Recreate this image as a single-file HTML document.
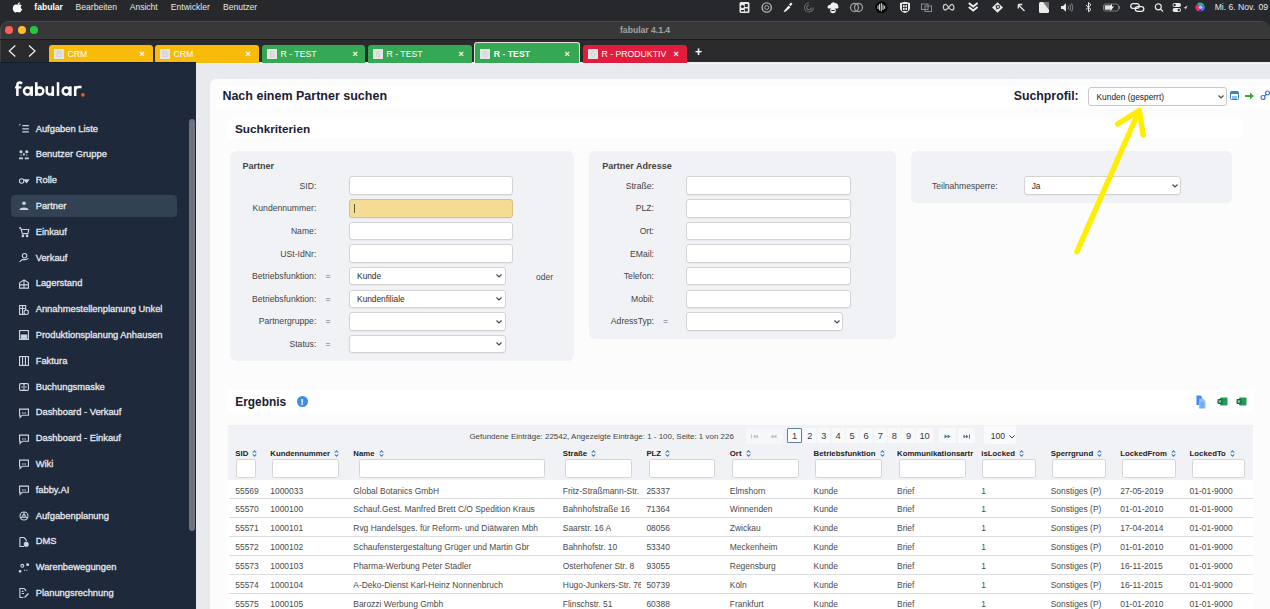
<!DOCTYPE html><html><head><meta charset="utf-8"><style>
*{margin:0;padding:0;box-sizing:border-box}
html,body{width:1270px;height:609px;overflow:hidden;background:#e9eaee;font-family:"Liberation Sans",sans-serif}
.t{position:absolute;white-space:nowrap}
.r{position:absolute}
svg{position:absolute;overflow:visible}
</style></head><body><div class="r" style="left:0px;top:0px;width:1270px;height:32px;background:#26282c;"></div>
<svg style="left:13px;top:2px" width="9" height="10" viewBox="0 0 9 10"><path d="M6.1 0.2c.1.7-.2 1.3-.6 1.8-.4.5-1 .8-1.6.7-.1-.6.2-1.3.6-1.7.4-.5 1.1-.8 1.6-.8zM8.4 7.2c-.3.6-.4.9-.8 1.5-.5.8-1.2 1.7-2 1.7-.8 0-1-.5-2-.5s-1.3.5-2 .5C.8 10.4.1 9.5-.4 8.7-1.6 6.6-.6 3.6.7 3 1.4 2.6 2 2.6 2.6 2.6c.7 0 1.1.4 1.7.4.6 0 .9-.4 1.8-.4.6 0 1.3.3 1.8.9-1.5.9-1.3 3.1.5 3.7z" fill="#fff" transform="translate(0.8,0)"/></svg>
<div class="t" style="left:34.3px;top:1.30px;line-height:12px;font-size:8.6px;color:#fff;font-weight:bold;">fabular</div>
<div class="t" style="left:75.6px;top:1.30px;line-height:12px;font-size:8.55px;color:#e6e6e6;font-weight:normal;">Bearbeiten</div>
<div class="t" style="left:129.7px;top:1.30px;line-height:12px;font-size:8.55px;color:#e6e6e6;font-weight:normal;">Ansicht</div>
<div class="t" style="left:170.8px;top:1.30px;line-height:12px;font-size:8.55px;color:#e6e6e6;font-weight:normal;">Entwickler</div>
<div class="t" style="left:223px;top:1.30px;line-height:12px;font-size:8.55px;color:#e6e6e6;font-weight:normal;">Benutzer</div>
<div class="t" style="left:1214.7px;top:1.30px;line-height:12px;font-size:8.6px;color:#e6e6e6;font-weight:normal;">Mi. 6. Nov.</div>
<div class="t" style="left:1258.4px;top:1.30px;line-height:12px;font-size:8.6px;color:#e6e6e6;font-weight:normal;">09</div>
<svg style="left:0;top:0" width="1270" height="21">
<g>
<rect x="739.5" y="2" width="10" height="11" rx="1.5" fill="#e8e8e8"/>
<circle cx="742.5" cy="6.5" r="1.6" fill="#26282c"/><rect x="744.8" y="4" width="3" height="3" fill="#26282c"/><rect x="744.8" y="8.5" width="3" height="3" fill="#26282c"/><rect x="741" y="10" width="3" height="1.5" fill="#26282c"/>
<circle cx="766.7" cy="7.5" r="4.6" fill="none" stroke="#b0b0b0" stroke-width="1.4"/><circle cx="766.7" cy="7.5" r="2" fill="none" stroke="#b0b0b0" stroke-width="1"/>
<path d="M783.5 11.5 L788.5 5.5 L790.5 7.5 L785 12 Z M789 4.5 L791 2.5 L792.5 4 L790.5 6.2 Z" fill="#f0f0f0"/>
<path d="M813.5 7.5 A4.5 4.5 0 1 1 809 3 M811.3 7.5 A2.3 2.3 0 1 1 809 5.2" fill="none" stroke="#6a6a6a" stroke-width="1.1"/>
<path d="M827.5 8 C827.5 5.5 829 4.5 830.5 4.8 C831 2.5 833.5 1.5 835 3 C836.5 2.8 838.5 4.5 838.5 7 C838.5 8 838 8.5 837 8.5 L828.5 8.5 Z" fill="#f0f0f0"/><circle cx="833" cy="10.5" r="2.8" fill="#f0f0f0"/><rect x="831.2" y="10" width="3.6" height="1" fill="#26282c"/>
<circle cx="854.5" cy="7.5" r="4" fill="none" stroke="#9a9a9a" stroke-width="1.3"/><circle cx="858.5" cy="7.5" r="4" fill="none" stroke="#9a9a9a" stroke-width="1.3"/>
<circle cx="881.4" cy="7.3" r="6" fill="#000"/><path d="M878 5.5 V9 M879.6 4 V10.5 M881.3 3 V11.5 M883 4.5 V10 M884.7 5.8 V8.8" stroke="#e8e8e8" stroke-width="1"/>
<path d="M900 3 L905 1.8 L910 3 L910 8 C910 10.5 907.5 12.5 905 13 C902.5 12.5 900 10.5 900 8 Z" fill="#eaeaea"/><rect x="902.5" y="4.5" width="5" height="6" fill="none" stroke="#26282c" stroke-width="1"/><path d="M902.5 7.5 H907.5 M905 4.5 V10.5" stroke="#26282c" stroke-width=".8"/>
<rect x="921.5" y="4" width="6.5" height="5.5" fill="none" stroke="#8a8a8a" stroke-width="1"/><rect x="925" y="6" width="6.5" height="5.5" fill="none" stroke="#8a8a8a" stroke-width="1"/>
<path d="M948.6 7.5 C947 4 945 3.8 944 5 C942.8 6.5 943.5 10 945 10 C946.5 10 947.5 8.5 948.6 7.5 C949.7 5.8 951 4 952.5 4.5 C954.5 5.5 954.3 10 952.3 10 C950.7 10 949.8 8.8 948.6 7.5Z" fill="none" stroke="#c8c8c8" stroke-width="1.3"/>
<path d="M968.8 3 L973.2 6.5 L977.6 3 M968.8 7 L973.2 10.5 L977.6 7" fill="none" stroke="#f2f2f2" stroke-width="1.8"/>
<path d="M997.5 2.2 L1003 7.5 L997.5 12.8 L992 7.5 Z" fill="#e6e6e6"/><path d="M995.5 5.5 L999.5 5 L1000 8 L996.5 9.5 Z" fill="#26282c"/><circle cx="998" cy="7" r="1" fill="#e6e6e6"/>
<path d="M1024.5 11 L1018.5 5 M1018.3 4.5 L1018.3 8.5 M1018.3 4.5 L1022.3 4.5" stroke="#e6e6e6" stroke-width="1.3" fill="none"/>
<rect x="1039" y="2" width="10" height="11" rx="1.5" fill="#ececec"/><path d="M1043 2 L1049 2 L1049 10 Z" fill="#777"/>
<path d="M1061 6 H1063 L1066 3.2 V11.8 L1063 9 H1061 Z" fill="#eaeaea"/><path d="M1068 5.8 Q1069 7.5 1068 9.2 M1069.8 4.5 Q1071.5 7.5 1069.8 10.5 M1071.6 3.3 Q1074 7.5 1071.6 11.7" stroke="#9a9a9a" stroke-width=".8" fill="none"/>
<path d="M1086 5 L1091 9.5 L1088.5 11.8 V2.5 L1091 4.8 L1086 9.5" stroke="#e6e6e6" stroke-width="1" fill="none"/>
<rect x="1103.5" y="4" width="15" height="7" rx="2" fill="none" stroke="#7a7a7a" stroke-width="1"/><rect x="1104.8" y="5.3" width="7" height="4.4" fill="#e0e0e0"/><path d="M1112 3.5 L1109 8 H1111.3 L1110 11.5 L1114 6.5 H1111.8 Z" fill="#f2f2f2"/><rect x="1119" y="6" width="1" height="3" fill="#7a7a7a"/>
<rect x="1130.7" y="3.7" width="8.5" height="4.6" rx="2.3" stroke="#ececec" stroke-width="1.3" fill="none"/><rect x="1135.3" y="6.7" width="8.5" height="4.6" rx="2.3" stroke="#ececec" stroke-width="1.3" fill="none"/>
<circle cx="1158.3" cy="6.8" r="3" fill="none" stroke="#e6e6e6" stroke-width="1.2"/><path d="M1160.5 9 L1163 11.5" stroke="#e6e6e6" stroke-width="1.3"/>
<rect x="1172.5" y="3" width="8.5" height="4" rx="2" fill="#eaeaea"/><rect x="1172.5" y="8" width="8.5" height="4" rx="2" fill="#eaeaea"/><circle cx="1174.6" cy="5" r="1.2" fill="#26282c"/><circle cx="1178.8" cy="10" r="1.2" fill="#26282c"/>
<path d="M1183.5 8 L1187.5 5.5 L1185.8 9.8 L1185.3 8.3 Z" fill="#d8d8d8"/>
<defs><radialGradient id="siri" cx="0.4" cy="0.4" r="0.7"><stop offset="0" stop-color="#c8d6ff"/><stop offset="0.45" stop-color="#8a4fd8"/><stop offset="1" stop-color="#3a2a6a"/></radialGradient><linearGradient id="siri2" x1="0" y1="0" x2="1" y2="1"><stop offset="0" stop-color="#e83a6a"/><stop offset="0.5" stop-color="#6a5af0"/><stop offset="1" stop-color="#2ac0c0"/></linearGradient></defs>
<clipPath id="sc"><circle cx="1200.1" cy="7.3" r="4.7"/></clipPath><g clip-path="url(#sc)"><rect x="1195" y="2" width="11" height="11" fill="#3b2f8a"/><ellipse cx="1197" cy="8" rx="3" ry="3.5" fill="#e0306a"/><ellipse cx="1201" cy="3.5" rx="3.5" ry="2.2" fill="#30b090"/><ellipse cx="1203" cy="8" rx="2.5" ry="3" fill="#3a7af0"/><circle cx="1200.5" cy="7.3" r="1.8" fill="#c8d0ff" opacity=".85"/></g>
</g></svg>
<div class="r" style="left:0px;top:20.5px;width:1270px;height:19px;background:#4a4a4a;border-radius:9px 9px 0 0"></div>
<div class="r" style="left:1px;top:21.5px;width:1269px;height:18px;background:#383838;border-radius:8px 8px 0 0"></div>
<div class="r" style="left:0px;top:39px;width:1270px;height:1px;background:#1c1c1c;"></div>
<div class="r" style="left:5px;top:26px;width:8px;height:8px;background:#fe5f57;border-radius:50%"></div>
<div class="r" style="left:17.5px;top:26px;width:8px;height:8px;background:#febc2e;border-radius:50%"></div>
<div class="r" style="left:30.200000000000003px;top:26px;width:8px;height:8px;background:#28c840;border-radius:50%"></div>
<div class="t" style="left:620px;top:23.80px;line-height:12px;font-size:8.6px;color:#a3a3a3;font-weight:bold;">fabular 4.1.4</div>
<div class="r" style="left:0px;top:40px;width:1270px;height:22px;background:#2a2a2c;"></div>
<div class="r" style="left:0px;top:40px;width:1px;height:22px;background:#3e3e40;"></div>
<div class="r" style="left:49px;top:45px;width:104px;height:17.5px;background:#f8bb0a;border-radius:3px 3px 0 0"></div>
<div class="r" style="left:54px;top:49.2px;width:10px;height:9.6px;background:#e4e4e4;"></div>
<div class="t" style="left:54px;top:48px;width:10px;text-align:center;line-height:12px;font-size:9px;color:#cfcfcf">B</div>
<div class="t" style="left:67.5px;top:48.00px;line-height:12px;font-size:8.7px;color:#fff;font-weight:normal;">CRM</div>
<div class="t" style="left:139.5px;top:47.50px;line-height:12px;font-size:9px;color:#fff;font-weight:bold;">&#215;</div>
<div class="r" style="left:155px;top:45px;width:104px;height:17.5px;background:#f8bb0a;border-radius:3px 3px 0 0"></div>
<div class="r" style="left:160px;top:49.2px;width:10px;height:9.6px;background:#e4e4e4;"></div>
<div class="t" style="left:160px;top:48px;width:10px;text-align:center;line-height:12px;font-size:9px;color:#cfcfcf">B</div>
<div class="t" style="left:173.5px;top:48.00px;line-height:12px;font-size:8.7px;color:#fff;font-weight:normal;">CRM</div>
<div class="t" style="left:245.5px;top:47.50px;line-height:12px;font-size:9px;color:#fff;font-weight:bold;">&#215;</div>
<div class="r" style="left:262px;top:45px;width:103px;height:17.5px;background:#34a853;border-radius:3px 3px 0 0"></div>
<div class="r" style="left:267px;top:49.2px;width:10px;height:9.6px;background:#e4e4e4;"></div>
<div class="t" style="left:267px;top:48px;width:10px;text-align:center;line-height:12px;font-size:9px;color:#cfcfcf">6</div>
<div class="t" style="left:280.5px;top:48.00px;line-height:12px;font-size:8.7px;color:#fff;font-weight:normal;">R - TEST</div>
<div class="t" style="left:352.5px;top:47.50px;line-height:12px;font-size:9px;color:#fff;font-weight:bold;">&#215;</div>
<div class="r" style="left:368px;top:45px;width:104px;height:17.5px;background:#34a853;border-radius:3px 3px 0 0"></div>
<div class="r" style="left:373px;top:49.2px;width:10px;height:9.6px;background:#e4e4e4;"></div>
<div class="t" style="left:373px;top:48px;width:10px;text-align:center;line-height:12px;font-size:9px;color:#cfcfcf">6</div>
<div class="t" style="left:386.5px;top:48.00px;line-height:12px;font-size:8.7px;color:#fff;font-weight:normal;">R - TEST</div>
<div class="t" style="left:458.5px;top:47.50px;line-height:12px;font-size:9px;color:#fff;font-weight:bold;">&#215;</div>
<div class="r" style="left:474px;top:42px;width:106px;height:20.5px;background:#34a853;border-radius:3px 3px 0 0;border:1.5px solid #e0e0e0;border-bottom:none"></div>
<div class="r" style="left:480.3px;top:49.2px;width:10px;height:9.6px;background:#e4e4e4;"></div>
<div class="t" style="left:480.3px;top:48px;width:10px;text-align:center;line-height:12px;font-size:9px;color:#cfcfcf">6</div>
<div class="t" style="left:493.8px;top:48.00px;line-height:12px;font-size:8.7px;color:#fff;font-weight:bold;">R - TEST</div>
<div class="t" style="left:564.5px;top:47.50px;line-height:12px;font-size:9px;color:#fff;font-weight:bold;">&#215;</div>
<div class="r" style="left:583px;top:45px;width:104px;height:17.5px;background:#e31c3d;border-radius:3px 3px 0 0"></div>
<div class="r" style="left:588px;top:49.2px;width:10px;height:9.6px;background:#e4e4e4;"></div>
<div class="t" style="left:588px;top:48px;width:10px;text-align:center;line-height:12px;font-size:9px;color:#cfcfcf">6</div>
<div class="t" style="left:601.5px;top:48.00px;line-height:12px;font-size:8.7px;color:#fff;font-weight:normal;">R - PRODUKTIV</div>
<div class="t" style="left:673.5px;top:47.50px;line-height:12px;font-size:9px;color:#fff;font-weight:bold;">&#215;</div>
<div class="t" style="left:695px;top:46.00px;line-height:12px;font-size:12px;color:#fff;font-weight:bold;">+</div>
<svg style="left:7px;top:45px" width="30" height="12"><path d="M8.3 0.5 L2.3 6 L8.3 11.5" stroke="#f4f4f4" stroke-width="1.2" fill="none"/><path d="M22 0.5 L28 6 L22 11.5" stroke="#f4f4f4" stroke-width="1.2" fill="none"/></svg>
<div class="r" style="left:0px;top:62px;width:196px;height:547px;background:#1e293b;"></div>
<div class="r" style="left:0px;top:62px;width:196px;height:1px;background:#131c2c;"></div>
<svg style="left:0;top:0" width="100" height="100"><g stroke="#fff" stroke-width="2.5" fill="none">
<path d="M22 83.6 C21.3 82.9 20.6 82.5 19.7 82.5 C18.3 82.5 17.4 83.4 17.4 85.2 V95.9"/><path d="M15.1 87.4 H21.3" stroke-width="2.2"/>
<circle cx="27.5" cy="91.1" r="3.55"/><path d="M31.7 86.3 V95.9"/>
<path d="M36.3 82.2 V95.9"/><circle cx="39.8" cy="91.1" r="3.55"/>
<path d="M46.8 86.3 V91.6 A3 3 0 0 0 52.8 91.6 M52.8 86.3 V95.9"/>
<path d="M58 82.2 V95.9"/>
<circle cx="66.2" cy="91.1" r="3.55"/><path d="M70.4 86.3 V95.9"/>
<path d="M75.2 86.3 V95.9 M75.2 90.8 C75.2 88.2 77 87.1 79.2 87.1 H81.5"/>
</g><circle cx="82.9" cy="94.8" r="1.85" fill="#f15a22"/></svg>
<div class="t" style="left:35.7px;top:122.50px;line-height:12px;font-size:9.35px;color:#e5e7eb;font-weight:normal;-webkit-text-stroke:0.3px #e5e7eb;">Aufgaben Liste</div>
<svg style="left:18.5px;top:124.00px" width="10" height="10" viewBox="0 0 9 9"><g stroke="#cbd5e1" fill="none" stroke-width="1"><path d="M3 1.5 H8.8 M3 4.3 H8.8 M3 7.1 H8.8" stroke-width="1.1"/><path d="M0 1 L1.4 0.3" stroke-width=".9"/></g></svg>
<div class="t" style="left:35.7px;top:148.30px;line-height:12px;font-size:9.35px;color:#e5e7eb;font-weight:normal;-webkit-text-stroke:0.3px #e5e7eb;">Benutzer Gruppe</div>
<svg style="left:18.5px;top:149.80px" width="10" height="10" viewBox="0 0 9 9"><g stroke="#cbd5e1" fill="none" stroke-width="1"><circle cx="1.8" cy="1.6" r=".9" fill="#cbd5e1"/><circle cx="7" cy="1.6" r=".9" fill="#cbd5e1"/><path d="M0 7.5 H3.6 M5.2 7.5 H8.8" stroke-width="1.6"/><circle cx="4.4" cy="4" r=".5" fill="#cbd5e1"/><path d="M1.8 4 V5.5 M7 4 V5.5" stroke-width=".7"/></g></svg>
<div class="t" style="left:35.7px;top:174.10px;line-height:12px;font-size:9.35px;color:#e5e7eb;font-weight:normal;-webkit-text-stroke:0.3px #e5e7eb;">Rolle</div>
<svg style="left:18.5px;top:175.60px" width="10" height="10" viewBox="0 0 9 9"><g stroke="#cbd5e1" fill="none" stroke-width="1"><circle cx="2.4" cy="4.5" r="2"/><path d="M5 3.5 H8.6 L6.8 6 Z" fill="#cbd5e1"/></g></svg>
<div class="r" style="left:10.6px;top:194.7px;width:166px;height:22.7px;background:#334155;border-radius:4px"></div>
<div class="t" style="left:35.7px;top:199.90px;line-height:12px;font-size:9.35px;color:#e5e7eb;font-weight:normal;-webkit-text-stroke:0.3px #e5e7eb;">Partner</div>
<svg style="left:18.5px;top:201.40px" width="10" height="10" viewBox="0 0 9 9"><g stroke="#cbd5e1" fill="none" stroke-width="1"><circle cx="4.5" cy="2" r="1.6" fill="#cbd5e1" stroke="none"/><path d="M0.3 8.2 C0.8 5.2 8.2 5.2 8.7 8.2 Z" fill="#cbd5e1" stroke="none"/></g></svg>
<div class="t" style="left:35.7px;top:225.70px;line-height:12px;font-size:9.35px;color:#e5e7eb;font-weight:normal;-webkit-text-stroke:0.3px #e5e7eb;">Einkauf</div>
<svg style="left:18.5px;top:227.20px" width="10" height="10" viewBox="0 0 9 9"><g stroke="#cbd5e1" fill="none" stroke-width="1"><path d="M0 0.8 H1.5 L3 6 H8 L8.8 2.2 H2"/><circle cx="3.5" cy="8" r=".7" fill="#cbd5e1"/><circle cx="7.3" cy="8" r=".7" fill="#cbd5e1"/></g></svg>
<div class="t" style="left:35.7px;top:251.50px;line-height:12px;font-size:9.35px;color:#e5e7eb;font-weight:normal;-webkit-text-stroke:0.3px #e5e7eb;">Verkauf</div>
<svg style="left:18.5px;top:253.00px" width="10" height="10" viewBox="0 0 9 9"><g stroke="#cbd5e1" fill="none" stroke-width="1"><circle cx="5" cy="2.5" r="2"/><path d="M0.5 8 L3 6 H6 L8.5 5"/></g></svg>
<div class="t" style="left:35.7px;top:277.30px;line-height:12px;font-size:9.35px;color:#e5e7eb;font-weight:normal;-webkit-text-stroke:0.3px #e5e7eb;">Lagerstand</div>
<svg style="left:18.5px;top:278.80px" width="10" height="10" viewBox="0 0 9 9"><g stroke="#cbd5e1" fill="none" stroke-width="1"><path d="M0.5 3.5 L4.5 0.8 L8.5 3.5 V8.2 H0.5 Z M0.5 5.3 H8.5 M4.5 0.8 V8.2"/></g></svg>
<div class="t" style="left:35.7px;top:303.10px;line-height:12px;font-size:9.35px;color:#e5e7eb;font-weight:normal;-webkit-text-stroke:0.3px #e5e7eb;">Annahmestellenplanung Unkel</div>
<svg style="left:18.5px;top:304.60px" width="10" height="10" viewBox="0 0 9 9"><g stroke="#cbd5e1" fill="none" stroke-width="1"><rect x="0.5" y="0.5" width="5.5" height="8"/><path d="M0.5 3.2 H6 M3.2 0.5 V8.5"/><circle cx="6.5" cy="6.5" r="2" fill="#1e293b"/></g></svg>
<div class="t" style="left:35.7px;top:328.90px;line-height:12px;font-size:9.35px;color:#e5e7eb;font-weight:normal;-webkit-text-stroke:0.3px #e5e7eb;">Produktionsplanung Anhausen</div>
<svg style="left:18.5px;top:330.40px" width="10" height="10" viewBox="0 0 9 9"><g stroke="#cbd5e1" fill="none" stroke-width="1"><rect x="0.5" y="0.5" width="8" height="8"/><rect x="2" y="4.5" width="5" height="3" fill="#cbd5e1"/></g></svg>
<div class="t" style="left:35.7px;top:354.70px;line-height:12px;font-size:9.35px;color:#e5e7eb;font-weight:normal;-webkit-text-stroke:0.3px #e5e7eb;">Faktura</div>
<svg style="left:18.5px;top:356.20px" width="10" height="10" viewBox="0 0 9 9"><g stroke="#cbd5e1" fill="none" stroke-width="1"><rect x="0.5" y="0.5" width="8" height="8"/><path d="M3.2 0.5 V8.5 M5.8 0.5 V8.5"/></g></svg>
<div class="t" style="left:35.7px;top:380.50px;line-height:12px;font-size:9.35px;color:#e5e7eb;font-weight:normal;-webkit-text-stroke:0.3px #e5e7eb;">Buchungsmaske</div>
<svg style="left:18.5px;top:382.00px" width="10" height="10" viewBox="0 0 9 9"><g stroke="#cbd5e1" fill="none" stroke-width="1"><rect x="0.5" y="1.5" width="8" height="6" rx="1"/><path d="M4.5 1.5 V7.5 M2 4.5 H3.5 M5.5 4.5 H7"/></g></svg>
<div class="t" style="left:35.7px;top:406.30px;line-height:12px;font-size:9.35px;color:#e5e7eb;font-weight:normal;-webkit-text-stroke:0.3px #e5e7eb;">Dashboard - Verkauf</div>
<svg style="left:18.5px;top:407.80px" width="10" height="10" viewBox="0 0 9 9"><g stroke="#cbd5e1" fill="none" stroke-width="1"><path d="M0.5 1 H8.5 V6.5 H3 L1 8.5 V6.5 H0.5 Z"/><path d="M3 4.5 H4 M5 4.5 H6" stroke-width="1.2"/></g></svg>
<div class="t" style="left:35.7px;top:432.10px;line-height:12px;font-size:9.35px;color:#e5e7eb;font-weight:normal;-webkit-text-stroke:0.3px #e5e7eb;">Dashboard - Einkauf</div>
<svg style="left:18.5px;top:433.60px" width="10" height="10" viewBox="0 0 9 9"><g stroke="#cbd5e1" fill="none" stroke-width="1"><path d="M0.5 1 H8.5 V6.5 H3 L1 8.5 V6.5 H0.5 Z"/><path d="M3 4.5 H4 M5 4.5 H6" stroke-width="1.2"/></g></svg>
<div class="t" style="left:35.7px;top:457.90px;line-height:12px;font-size:9.35px;color:#e5e7eb;font-weight:normal;-webkit-text-stroke:0.3px #e5e7eb;">Wiki</div>
<svg style="left:18.5px;top:459.40px" width="10" height="10" viewBox="0 0 9 9"><g stroke="#cbd5e1" fill="none" stroke-width="1"><path d="M0.5 1 H8.5 V6.5 H3 L1 8.5 V6.5 H0.5 Z"/><path d="M3 4.5 H4 M5 4.5 H6" stroke-width="1.2"/></g></svg>
<div class="t" style="left:35.7px;top:483.70px;line-height:12px;font-size:9.35px;color:#e5e7eb;font-weight:normal;-webkit-text-stroke:0.3px #e5e7eb;">fabby.AI</div>
<svg style="left:18.5px;top:485.20px" width="10" height="10" viewBox="0 0 9 9"><g stroke="#cbd5e1" fill="none" stroke-width="1"><path d="M0.5 1 H8.5 V6.5 H3 L1 8.5 V6.5 H0.5 Z"/><path d="M3 4.5 H4 M5 4.5 H6" stroke-width="1.2"/></g></svg>
<div class="t" style="left:35.7px;top:509.50px;line-height:12px;font-size:9.35px;color:#e5e7eb;font-weight:normal;-webkit-text-stroke:0.3px #e5e7eb;">Aufgabenplanung</div>
<svg style="left:18.5px;top:511.00px" width="10" height="10" viewBox="0 0 9 9"><g stroke="#cbd5e1" fill="none" stroke-width="1"><circle cx="4.5" cy="4.5" r="3.6"/><circle cx="4.5" cy="4.5" r="1.2"/><path d="M4.5 0.9 V3.3 M1.4 6.3 L3.4 5.2 M7.6 6.3 L5.6 5.2"/></g></svg>
<div class="t" style="left:35.7px;top:535.30px;line-height:12px;font-size:9.35px;color:#e5e7eb;font-weight:normal;-webkit-text-stroke:0.3px #e5e7eb;">DMS</div>
<svg style="left:18.5px;top:536.80px" width="10" height="10" viewBox="0 0 9 9"><g stroke="#cbd5e1" fill="none" stroke-width="1"><path d="M0.8 0.5 H4.5 L6.5 2.5 V4 M4.5 8.5 H0.8 V0.5"/><circle cx="6.5" cy="6.5" r="1.8" fill="#cbd5e1"/></g></svg>
<div class="t" style="left:35.7px;top:561.10px;line-height:12px;font-size:9.35px;color:#e5e7eb;font-weight:normal;-webkit-text-stroke:0.3px #e5e7eb;">Warenbewegungen</div>
<svg style="left:18.5px;top:562.60px" width="10" height="10" viewBox="0 0 9 9"><g stroke="#cbd5e1" fill="none" stroke-width="1"><circle cx="3" cy="2.5" r="1.3"/><circle cx="1" cy="7.5" r=".8" fill="#cbd5e1"/><circle cx="7.8" cy="1.5" r=".8" fill="#cbd5e1"/><path d="M4.5 6.5 H8.5" stroke-dasharray="1 1"/></g></svg>
<div class="t" style="left:35.7px;top:586.90px;line-height:12px;font-size:9.35px;color:#e5e7eb;font-weight:normal;-webkit-text-stroke:0.3px #e5e7eb;">Planungsrechnung</div>
<svg style="left:18.5px;top:588.40px" width="10" height="10" viewBox="0 0 9 9"><g stroke="#cbd5e1" fill="none" stroke-width="1"><path d="M6 3 V1.8 L4.5 0.5 H0.8 V8.5 H4"/><path d="M2.5 5 H4.5 M2.5 3 H4"/><path d="M5 8.5 L8.5 5" stroke-width="1.2"/></g></svg>
<div class="r" style="left:188.7px;top:118.7px;width:6px;height:412px;background:#6e737d;border-radius:3px"></div>
<div class="r" style="left:196px;top:62.5px;width:1074px;height:1.5px;background:#f6f6f8;"></div>
<div class="r" style="left:209.5px;top:79px;width:1061px;height:530px;background:#fcfcfd;border-radius:6px 0 0 0"></div>
<div class="r" style="left:216px;top:85.5px;width:1054px;height:22.3px;background:#ffffff;"></div>
<div class="t" style="left:222.4px;top:87.70px;line-height:16px;font-size:12.5px;color:#1b2030;font-weight:bold;">Nach einem Partner suchen</div>
<div class="t" style="left:1013.8px;top:87.70px;line-height:16px;font-size:12.3px;color:#1b2030;font-weight:bold;">Suchprofil:</div>
<div class="r" style="left:1088px;top:87px;width:139px;height:18.5px;background:#fff;border:1px solid #c8c8c8;border-radius:3px"></div>
<div class="t" style="left:1096.5px;top:90.60px;line-height:12px;font-size:8.4px;color:#222;font-weight:normal;">Kunden (gesperrt)</div>
<svg style="left:1218px;top:94.5px" width="6" height="4"><path d="M0.5 0.5 L3 3 L5.5 0.5" stroke="#444" stroke-width="1.1" fill="none"/></svg>
<svg style="left:1230px;top:91px" width="9" height="9" viewBox="0 0 9 9"><rect x="0.5" y="0.5" width="8" height="8" rx="1" fill="none" stroke="#3b82c4" stroke-width="1"/><rect x="0.5" y="0.5" width="8" height="2.5" fill="#3b82c4"/><rect x="2" y="5" width="5" height="3" fill="#8fc0ea"/></svg>
<svg style="left:1245px;top:92px" width="10" height="8" viewBox="0 0 10 8"><path d="M0 4 H7" stroke="#3aa53a" stroke-width="2"/><path d="M5 0.8 L9 4 L5 7.2 Z" fill="#3aa53a"/></svg>
<svg style="left:1260px;top:90px" width="10" height="11" viewBox="0 0 10 11"><circle cx="3" cy="7.5" r="2" fill="none" stroke="#2f6fd8" stroke-width="1.2"/><circle cx="7.5" cy="3" r="2" fill="none" stroke="#2f6fd8" stroke-width="1.2"/><path d="M4.3 6.2 L6.2 4.3" stroke="#2f6fd8" stroke-width="1.2"/></svg>
<div class="r" style="left:228px;top:119px;width:1013px;height:18.5px;background:#ffffff;"></div>
<div class="t" style="left:235px;top:120.60px;line-height:16px;font-size:11.75px;color:#1b2030;font-weight:bold;">Suchkriterien</div>
<div class="r" style="left:229.5px;top:150.5px;width:344.5px;height:210.5px;background:#f1f2f6;border-radius:6px"></div>
<div class="r" style="left:589.2px;top:150.5px;width:306.8px;height:188.5px;background:#f1f2f6;border-radius:6px"></div>
<div class="r" style="left:910.7px;top:150.5px;width:321px;height:52.2px;background:#f1f2f6;border-radius:6px"></div>
<div class="t" style="left:242.4px;top:159.90px;line-height:12px;font-size:9.05px;color:#454545;font-weight:bold;">Partner</div>
<div class="t" style="left:602.2px;top:159.90px;line-height:12px;font-size:9.05px;color:#454545;font-weight:bold;">Partner Adresse</div>
<div class="t" style="left:16.30000000000001px;width:300px;text-align:right;top:179.60px;line-height:12px;font-size:8.65px;color:#444;font-weight:normal;">SID:</div>
<div class="r" style="left:349.1px;top:176.35px;width:164px;height:18.5px;background:#fff;border:1px solid #d3d3d3;border-radius:3px;box-shadow:0 1px 1px rgba(0,0,0,.04)"></div>
<div class="t" style="left:16.30000000000001px;width:300px;text-align:right;top:202.30px;line-height:12px;font-size:8.65px;color:#444;font-weight:normal;">Kundennummer:</div>
<div class="r" style="left:349.1px;top:199.05px;width:164px;height:18.5px;background:#f5dc95;border:1px solid #dcc07e;border-radius:3px;box-shadow:0 1px 1px rgba(0,0,0,.04)"></div>
<div class="t" style="left:16.30000000000001px;width:300px;text-align:right;top:225.00px;line-height:12px;font-size:8.65px;color:#444;font-weight:normal;">Name:</div>
<div class="r" style="left:349.1px;top:221.75px;width:164px;height:18.5px;background:#fff;border:1px solid #d3d3d3;border-radius:3px;box-shadow:0 1px 1px rgba(0,0,0,.04)"></div>
<div class="t" style="left:16.30000000000001px;width:300px;text-align:right;top:247.60px;line-height:12px;font-size:8.65px;color:#444;font-weight:normal;">USt-IdNr:</div>
<div class="r" style="left:349.1px;top:244.35px;width:164px;height:18.5px;background:#fff;border:1px solid #d3d3d3;border-radius:3px;box-shadow:0 1px 1px rgba(0,0,0,.04)"></div>
<div class="t" style="left:16.30000000000001px;width:300px;text-align:right;top:270.20px;line-height:12px;font-size:8.65px;color:#444;font-weight:normal;">Betriebsfunktion:</div>
<div class="t" style="left:325.6px;top:270.20px;line-height:12px;font-size:8.6px;color:#666;font-weight:normal;">=</div>
<div class="r" style="left:349.1px;top:266.95px;width:156.6px;height:18.5px;background:#fff;border:1px solid #d3d3d3;border-radius:3px;box-shadow:0 1px 1px rgba(0,0,0,.04)"></div>
<div class="t" style="left:357.1px;top:270.20px;line-height:12px;font-size:8.3px;color:#2a2a2a;font-weight:normal;">Kunde</div>
<svg style="left:496.20000000000005px;top:274.4px" width="6" height="4"><path d="M0.5 0.5 L3 3 L5.5 0.5" stroke="#444" stroke-width="1.1" fill="none"/></svg>
<div class="t" style="left:16.30000000000001px;width:300px;text-align:right;top:292.80px;line-height:12px;font-size:8.65px;color:#444;font-weight:normal;">Betriebsfunktion:</div>
<div class="t" style="left:325.6px;top:292.80px;line-height:12px;font-size:8.6px;color:#666;font-weight:normal;">=</div>
<div class="r" style="left:349.1px;top:289.55px;width:156.6px;height:18.5px;background:#fff;border:1px solid #d3d3d3;border-radius:3px;box-shadow:0 1px 1px rgba(0,0,0,.04)"></div>
<div class="t" style="left:357.1px;top:292.80px;line-height:12px;font-size:8.3px;color:#2a2a2a;font-weight:normal;">Kundenfiliale</div>
<svg style="left:496.20000000000005px;top:297.0px" width="6" height="4"><path d="M0.5 0.5 L3 3 L5.5 0.5" stroke="#444" stroke-width="1.1" fill="none"/></svg>
<div class="t" style="left:16.30000000000001px;width:300px;text-align:right;top:315.40px;line-height:12px;font-size:8.65px;color:#444;font-weight:normal;">Partnergruppe:</div>
<div class="t" style="left:325.6px;top:315.40px;line-height:12px;font-size:8.6px;color:#666;font-weight:normal;">=</div>
<div class="r" style="left:349.1px;top:312.15px;width:156.6px;height:18.5px;background:#fff;border:1px solid #d3d3d3;border-radius:3px;box-shadow:0 1px 1px rgba(0,0,0,.04)"></div>
<svg style="left:496.20000000000005px;top:319.59999999999997px" width="6" height="4"><path d="M0.5 0.5 L3 3 L5.5 0.5" stroke="#444" stroke-width="1.1" fill="none"/></svg>
<div class="t" style="left:16.30000000000001px;width:300px;text-align:right;top:338.00px;line-height:12px;font-size:8.65px;color:#444;font-weight:normal;">Status:</div>
<div class="t" style="left:325.6px;top:338.00px;line-height:12px;font-size:8.6px;color:#666;font-weight:normal;">=</div>
<div class="r" style="left:349.1px;top:334.75px;width:156.6px;height:18.5px;background:#fff;border:1px solid #d3d3d3;border-radius:3px;box-shadow:0 1px 1px rgba(0,0,0,.04)"></div>
<svg style="left:496.20000000000005px;top:342.2px" width="6" height="4"><path d="M0.5 0.5 L3 3 L5.5 0.5" stroke="#444" stroke-width="1.1" fill="none"/></svg>
<div class="r" style="left:354px;top:344px;width:0px;height:0px;background:none;"></div>
<div class="r" style="left:354.3px;top:203.8px;width:1px;height:9px;background:#5a5a48;"></div>
<div class="t" style="left:536px;top:270.60px;line-height:12px;font-size:8.5px;color:#444;font-weight:normal;">oder</div>
<div class="t" style="left:354px;width:300px;text-align:right;top:179.60px;line-height:12px;font-size:8.65px;color:#444;font-weight:normal;">Straße:</div>
<div class="r" style="left:686.4px;top:176.35px;width:164.6px;height:18.5px;background:#fff;border:1px solid #d3d3d3;border-radius:3px;box-shadow:0 1px 1px rgba(0,0,0,.04)"></div>
<div class="t" style="left:354px;width:300px;text-align:right;top:202.30px;line-height:12px;font-size:8.65px;color:#444;font-weight:normal;">PLZ:</div>
<div class="r" style="left:686.4px;top:199.05px;width:164.6px;height:18.5px;background:#fff;border:1px solid #d3d3d3;border-radius:3px;box-shadow:0 1px 1px rgba(0,0,0,.04)"></div>
<div class="t" style="left:354px;width:300px;text-align:right;top:225.00px;line-height:12px;font-size:8.65px;color:#444;font-weight:normal;">Ort:</div>
<div class="r" style="left:686.4px;top:221.75px;width:164.6px;height:18.5px;background:#fff;border:1px solid #d3d3d3;border-radius:3px;box-shadow:0 1px 1px rgba(0,0,0,.04)"></div>
<div class="t" style="left:354px;width:300px;text-align:right;top:247.60px;line-height:12px;font-size:8.65px;color:#444;font-weight:normal;">EMail:</div>
<div class="r" style="left:686.4px;top:244.35px;width:164.6px;height:18.5px;background:#fff;border:1px solid #d3d3d3;border-radius:3px;box-shadow:0 1px 1px rgba(0,0,0,.04)"></div>
<div class="t" style="left:354px;width:300px;text-align:right;top:270.20px;line-height:12px;font-size:8.65px;color:#444;font-weight:normal;">Telefon:</div>
<div class="r" style="left:686.4px;top:266.95px;width:164.6px;height:18.5px;background:#fff;border:1px solid #d3d3d3;border-radius:3px;box-shadow:0 1px 1px rgba(0,0,0,.04)"></div>
<div class="t" style="left:354px;width:300px;text-align:right;top:292.80px;line-height:12px;font-size:8.65px;color:#444;font-weight:normal;">Mobil:</div>
<div class="r" style="left:686.4px;top:289.55px;width:164.6px;height:18.5px;background:#fff;border:1px solid #d3d3d3;border-radius:3px;box-shadow:0 1px 1px rgba(0,0,0,.04)"></div>
<div class="t" style="left:354px;width:300px;text-align:right;top:315.40px;line-height:12px;font-size:8.65px;color:#444;font-weight:normal;">AdressTyp:</div>
<div class="t" style="left:663px;top:315.40px;line-height:12px;font-size:8.6px;color:#666;font-weight:normal;">=</div>
<div class="r" style="left:686.4px;top:312.15px;width:156.6px;height:18.5px;background:#fff;border:1px solid #d3d3d3;border-radius:3px;box-shadow:0 1px 1px rgba(0,0,0,.04)"></div>
<svg style="left:833.5px;top:319.59999999999997px" width="6" height="4"><path d="M0.5 0.5 L3 3 L5.5 0.5" stroke="#444" stroke-width="1.1" fill="none"/></svg>
<div class="t" style="left:932px;top:179.90px;line-height:12px;font-size:8.55px;color:#444;font-weight:normal;">Teilnahmesperre:</div>
<div class="r" style="left:1023.7px;top:176.2px;width:157.3px;height:19px;background:#fff;border:1px solid #d3d3d3;border-radius:3px;box-shadow:0 1px 1px rgba(0,0,0,.04)"></div>
<div class="t" style="left:1031.7px;top:179.70px;line-height:12px;font-size:8.3px;color:#2a2a2a;font-weight:normal;">Ja</div>
<svg style="left:1171.5px;top:183.89999999999998px" width="6" height="4"><path d="M0.5 0.5 L3 3 L5.5 0.5" stroke="#444" stroke-width="1.1" fill="none"/></svg>
<div class="r" style="left:228.4px;top:389.5px;width:1025px;height:23.2px;background:#ffffff;"></div>
<div class="t" style="left:235.3px;top:394.00px;line-height:16px;font-size:11.9px;color:#1b2030;font-weight:bold;">Ergebnis</div>
<div class="r" style="left:296.5px;top:396.2px;width:11px;height:11px;background:#3b8fe0;border-radius:50%"></div>
<div class="t" style="left:296.5px;top:395.7px;width:11px;text-align:center;line-height:12px;font-size:9px;color:#fff;font-weight:bold">!</div>
<svg style="left:1196px;top:394.5px" width="10" height="14" viewBox="0 0 10 14"><path d="M0.5 0.5 H4.5 L6 2 V10 H0.5 Z" fill="#3d8ef0"/><path d="M3 3.5 H7 L9.5 6 V13.5 H3 Z" fill="#8cc0f7"/><path d="M4.5 8 H8 M4.5 10 H8 M4.5 12 H8" stroke="#3d8ef0" stroke-width=".8"/></svg>
<svg style="left:1217px;top:397px" width="11" height="9" viewBox="0 0 11 9"><rect x="3" y="0.5" width="7.5" height="8" rx="1" fill="#1f9d55"/><rect x="0.5" y="2" width="5" height="5" rx="1" fill="#0f6b3a"/><path d="M1.8 3.2 L4 5.8 M4 3.2 L1.8 5.8" stroke="#fff" stroke-width=".7"/></svg>
<svg style="left:1236px;top:397px" width="11" height="9" viewBox="0 0 11 9"><rect x="3" y="0.5" width="7.5" height="8" rx="1" fill="#1f9d55"/><rect x="0.5" y="2" width="5" height="5" rx="1" fill="#0f6b3a"/><path d="M1.8 3.2 L4 5.8 M4 3.2 L1.8 5.8" stroke="#fff" stroke-width=".7"/></svg>
<div class="r" style="left:228.4px;top:424.8px;width:1024.2px;height:55px;background:#f1f2f6;"></div>
<div class="t" style="left:469.4px;top:430.50px;line-height:12px;font-size:7.96px;color:#444;font-weight:normal;">Gefundene Einträge: 22542, Angezeigte Einträge: 1 - 100, Seite: 1 von 226</div>
<div class="r" style="left:745.5px;top:429px;width:19px;height:14.5px;background:#f6f7f9;"></div>
<div class="r" style="left:764.8px;top:429px;width:18.6px;height:14.5px;background:#f6f7f9;"></div>
<svg style="left:751px;top:433.5px" width="8" height="5"><rect x="0" y="0.3" width="0.9" height="4.4" fill="#b4c0cc"/><path d="M2 2.5 L4.5 0.5 V4.5 Z M4.5 2.5 L7 0.5 V4.5 Z" fill="#b4c0cc"/></svg>
<svg style="left:770px;top:433.5px" width="8" height="5"><path d="M0.5 2.5 L3.5 0.5 V4.5 Z M3.5 2.5 L6.5 0.5 V4.5 Z" fill="#b4c0cc"/></svg>
<div class="r" style="left:787.2px;top:428.3px;width:14.7px;height:15px;background:#fafbfc;border:1.5px solid #5f8296;border-radius:1px"></div>
<div class="t" style="left:787.2px;top:430.3px;width:14.7px;text-align:center;line-height:12px;font-size:9.3px;color:#3a3a3a">1</div>
<div class="r" style="left:803.3px;top:428.3px;width:13px;height:15px;background:#f8f9fb;"></div>
<div class="t" style="left:803.3px;top:430.3px;width:13px;text-align:center;line-height:12px;font-size:9.3px;color:#3a3a3a">2</div>
<div class="r" style="left:817.4px;top:428.3px;width:13px;height:15px;background:#f8f9fb;"></div>
<div class="t" style="left:817.4px;top:430.3px;width:13px;text-align:center;line-height:12px;font-size:9.3px;color:#3a3a3a">3</div>
<div class="r" style="left:831.5px;top:428.3px;width:13px;height:15px;background:#f8f9fb;"></div>
<div class="t" style="left:831.5px;top:430.3px;width:13px;text-align:center;line-height:12px;font-size:9.3px;color:#3a3a3a">4</div>
<div class="r" style="left:845.6px;top:428.3px;width:13px;height:15px;background:#f8f9fb;"></div>
<div class="t" style="left:845.6px;top:430.3px;width:13px;text-align:center;line-height:12px;font-size:9.3px;color:#3a3a3a">5</div>
<div class="r" style="left:859.7px;top:428.3px;width:13px;height:15px;background:#f8f9fb;"></div>
<div class="t" style="left:859.7px;top:430.3px;width:13px;text-align:center;line-height:12px;font-size:9.3px;color:#3a3a3a">6</div>
<div class="r" style="left:873.8000000000001px;top:428.3px;width:13px;height:15px;background:#f8f9fb;"></div>
<div class="t" style="left:873.8000000000001px;top:430.3px;width:13px;text-align:center;line-height:12px;font-size:9.3px;color:#3a3a3a">7</div>
<div class="r" style="left:887.9000000000001px;top:428.3px;width:13px;height:15px;background:#f8f9fb;"></div>
<div class="t" style="left:887.9000000000001px;top:430.3px;width:13px;text-align:center;line-height:12px;font-size:9.3px;color:#3a3a3a">8</div>
<div class="r" style="left:902.0000000000001px;top:428.3px;width:13px;height:15px;background:#f8f9fb;"></div>
<div class="t" style="left:902.0000000000001px;top:430.3px;width:13px;text-align:center;line-height:12px;font-size:9.3px;color:#3a3a3a">9</div>
<div class="r" style="left:916px;top:428.3px;width:17.2px;height:15px;background:#f8f9fb;"></div>
<div class="t" style="left:916px;top:430.3px;width:17.2px;text-align:center;line-height:12px;font-size:9.3px;color:#3a3a3a">10</div>
<div class="r" style="left:939px;top:428.3px;width:17px;height:15px;background:#f8f9fb;"></div>
<div class="r" style="left:958px;top:428.3px;width:17px;height:15px;background:#f8f9fb;"></div>
<svg style="left:944px;top:433.5px" width="8" height="5"><path d="M0.5 0.5 L3.5 2.5 L0.5 4.5 Z M3.5 0.5 L6.5 2.5 L3.5 4.5 Z" fill="#4f7590"/></svg>
<svg style="left:963px;top:433.5px" width="8" height="5"><path d="M0.5 0.5 L3 2.5 L0.5 4.5 Z M3 0.5 L5.5 2.5 L3 4.5 Z" fill="#4f7590"/><rect x="6" y="0.3" width="0.9" height="4.4" fill="#4f7590"/></svg>
<div class="r" style="left:984px;top:426px;width:31.7px;height:18px;background:#f9fafb;border-radius:3px"></div>
<div class="t" style="left:990.7px;top:430.00px;line-height:12px;font-size:8.6px;color:#333;font-weight:normal;">100</div>
<svg style="left:1008.5px;top:434.5px" width="6" height="4"><path d="M0.5 0.5 L3 3 L5.5 0.5" stroke="#444" stroke-width="1" fill="none"/></svg>
<div class="t" style="left:235.3px;top:447.60px;line-height:12px;font-size:7.8px;color:#222;font-weight:bold;">SID</div>
<svg style="left:252.30312500000002px;top:450px" width="5" height="7" viewBox="0 0 5 7"><path d="M0.7 2.6 L2.5 0.8 L4.3 2.6 M0.7 4.4 L2.5 6.2 L4.3 4.4" stroke="#4a86b5" stroke-width="1.05" fill="none"/></svg>
<div class="r" style="left:236px;top:459.1px;width:20px;height:18.5px;background:#fff;border:1px solid #d4d4d4;border-radius:2.5px"></div>
<div class="t" style="left:270.3px;top:447.60px;line-height:12px;font-size:7.8px;color:#222;font-weight:bold;">Kundennummer</div>
<svg style="left:334.1px;top:450px" width="5" height="7" viewBox="0 0 5 7"><path d="M0.7 2.6 L2.5 0.8 L4.3 2.6 M0.7 4.4 L2.5 6.2 L4.3 4.4" stroke="#4a86b5" stroke-width="1.05" fill="none"/></svg>
<div class="r" style="left:271.5px;top:459.1px;width:67.10000000000002px;height:18.5px;background:#fff;border:1px solid #d4d4d4;border-radius:2.5px"></div>
<div class="t" style="left:353.3px;top:447.60px;line-height:12px;font-size:7.8px;color:#222;font-weight:bold;">Name</div>
<svg style="left:378.54375px;top:450px" width="5" height="7" viewBox="0 0 5 7"><path d="M0.7 2.6 L2.5 0.8 L4.3 2.6 M0.7 4.4 L2.5 6.2 L4.3 4.4" stroke="#4a86b5" stroke-width="1.05" fill="none"/></svg>
<div class="r" style="left:358.5px;top:459.1px;width:186.0px;height:18.5px;background:#fff;border:1px solid #d4d4d4;border-radius:2.5px"></div>
<div class="t" style="left:562.8px;top:447.60px;line-height:12px;font-size:7.8px;color:#222;font-weight:bold;">Straße</div>
<svg style="left:591.0749999999999px;top:450px" width="5" height="7" viewBox="0 0 5 7"><path d="M0.7 2.6 L2.5 0.8 L4.3 2.6 M0.7 4.4 L2.5 6.2 L4.3 4.4" stroke="#4a86b5" stroke-width="1.05" fill="none"/></svg>
<div class="r" style="left:564.7px;top:459.1px;width:67.0px;height:18.5px;background:#fff;border:1px solid #d4d4d4;border-radius:2.5px"></div>
<div class="t" style="left:646.4px;top:447.60px;line-height:12px;font-size:7.8px;color:#222;font-weight:bold;">PLZ</div>
<svg style="left:665.13125px;top:450px" width="5" height="7" viewBox="0 0 5 7"><path d="M0.7 2.6 L2.5 0.8 L4.3 2.6 M0.7 4.4 L2.5 6.2 L4.3 4.4" stroke="#4a86b5" stroke-width="1.05" fill="none"/></svg>
<div class="r" style="left:648.5px;top:459.1px;width:66.10000000000002px;height:18.5px;background:#fff;border:1px solid #d4d4d4;border-radius:2.5px"></div>
<div class="t" style="left:729.8px;top:447.60px;line-height:12px;font-size:7.8px;color:#222;font-weight:bold;">Ort</div>
<svg style="left:745.5px;top:450px" width="5" height="7" viewBox="0 0 5 7"><path d="M0.7 2.6 L2.5 0.8 L4.3 2.6 M0.7 4.4 L2.5 6.2 L4.3 4.4" stroke="#4a86b5" stroke-width="1.05" fill="none"/></svg>
<div class="r" style="left:732px;top:459.1px;width:66.70000000000005px;height:18.5px;background:#fff;border:1px solid #d4d4d4;border-radius:2.5px"></div>
<div class="t" style="left:813.6px;top:447.60px;line-height:12px;font-size:7.8px;color:#222;font-weight:bold;">Betriebsfunktion</div>
<svg style="left:879.5640625px;top:450px" width="5" height="7" viewBox="0 0 5 7"><path d="M0.7 2.6 L2.5 0.8 L4.3 2.6 M0.7 4.4 L2.5 6.2 L4.3 4.4" stroke="#4a86b5" stroke-width="1.05" fill="none"/></svg>
<div class="r" style="left:815px;top:459.1px;width:67px;height:18.5px;background:#fff;border:1px solid #d4d4d4;border-radius:2.5px"></div>
<div class="t" style="left:897px;top:447.6px;width:77px;overflow:hidden;line-height:12px;font-size:7.8px;color:#222;font-weight:bold">Kommunikationsartr</div>
<div class="r" style="left:899px;top:459.1px;width:67px;height:18.5px;background:#fff;border:1px solid #d4d4d4;border-radius:2.5px"></div>
<div class="t" style="left:981.3px;top:447.60px;line-height:12px;font-size:7.8px;color:#222;font-weight:bold;">isLocked</div>
<svg style="left:1019.109375px;top:450px" width="5" height="7" viewBox="0 0 5 7"><path d="M0.7 2.6 L2.5 0.8 L4.3 2.6 M0.7 4.4 L2.5 6.2 L4.3 4.4" stroke="#4a86b5" stroke-width="1.05" fill="none"/></svg>
<div class="r" style="left:982px;top:459.1px;width:54px;height:18.5px;background:#fff;border:1px solid #d4d4d4;border-radius:2.5px"></div>
<div class="t" style="left:1050.7px;top:447.60px;line-height:12px;font-size:7.8px;color:#222;font-weight:bold;">Sperrgrund</div>
<svg style="left:1097.16875px;top:450px" width="5" height="7" viewBox="0 0 5 7"><path d="M0.7 2.6 L2.5 0.8 L4.3 2.6 M0.7 4.4 L2.5 6.2 L4.3 4.4" stroke="#4a86b5" stroke-width="1.05" fill="none"/></svg>
<div class="r" style="left:1052px;top:459.1px;width:54px;height:18.5px;background:#fff;border:1px solid #d4d4d4;border-radius:2.5px"></div>
<div class="t" style="left:1120.2px;top:447.60px;line-height:12px;font-size:7.8px;color:#222;font-weight:bold;">LockedFrom</div>
<svg style="left:1171.0046875px;top:450px" width="5" height="7" viewBox="0 0 5 7"><path d="M0.7 2.6 L2.5 0.8 L4.3 2.6 M0.7 4.4 L2.5 6.2 L4.3 4.4" stroke="#4a86b5" stroke-width="1.05" fill="none"/></svg>
<div class="r" style="left:1122px;top:459.1px;width:54px;height:18.5px;background:#fff;border:1px solid #d4d4d4;border-radius:2.5px"></div>
<div class="t" style="left:1189.6px;top:447.60px;line-height:12px;font-size:7.8px;color:#222;font-weight:bold;">LockedTo</div>
<svg style="left:1229.8546875px;top:450px" width="5" height="7" viewBox="0 0 5 7"><path d="M0.7 2.6 L2.5 0.8 L4.3 2.6 M0.7 4.4 L2.5 6.2 L4.3 4.4" stroke="#4a86b5" stroke-width="1.05" fill="none"/></svg>
<div class="r" style="left:1192px;top:459.1px;width:53px;height:18.5px;background:#fff;border:1px solid #d4d4d4;border-radius:2.5px"></div>
<div class="r" style="left:228.4px;top:480px;width:1024.2px;height:129px;background:#ffffff;"></div>
<div class="t" style="left:235.3px;top:484.50px;line-height:12px;font-size:8.45px;color:#4a4a4a;font-weight:normal;">55569</div>
<div class="t" style="left:270.3px;top:484.50px;line-height:12px;font-size:8.45px;color:#4a4a4a;font-weight:normal;">1000033</div>
<div class="t" style="left:353.3px;top:484.50px;line-height:12px;font-size:8.45px;color:#4a4a4a;font-weight:normal;">Global Botanics GmbH</div>
<div class="t" style="left:562.8px;top:484.5px;width:78px;overflow:hidden;line-height:12px;font-size:8.45px;color:#4a4a4a">Fritz-Straßmann-Str.</div>
<div class="t" style="left:646.4px;top:484.50px;line-height:12px;font-size:8.45px;color:#4a4a4a;font-weight:normal;">25337</div>
<div class="t" style="left:729.8px;top:484.50px;line-height:12px;font-size:8.45px;color:#4a4a4a;font-weight:normal;">Elmshorn</div>
<div class="t" style="left:813.6px;top:484.50px;line-height:12px;font-size:8.45px;color:#4a4a4a;font-weight:normal;">Kunde</div>
<div class="t" style="left:897px;top:484.50px;line-height:12px;font-size:8.45px;color:#4a4a4a;font-weight:normal;">Brief</div>
<div class="t" style="left:981.3px;top:484.50px;line-height:12px;font-size:8.45px;color:#4a4a4a;font-weight:normal;">1</div>
<div class="t" style="left:1050.7px;top:484.50px;line-height:12px;font-size:8.45px;color:#4a4a4a;font-weight:normal;">Sonstiges (P)</div>
<div class="t" style="left:1120.2px;top:484.50px;line-height:12px;font-size:8.45px;color:#4a4a4a;font-weight:normal;">27-05-2019</div>
<div class="t" style="left:1189.6px;top:484.50px;line-height:12px;font-size:8.45px;color:#4a4a4a;font-weight:normal;">01-01-9000</div>
<div class="r" style="left:229px;top:498px;width:1023.6px;height:1px;background:#dcdde1;"></div>
<div class="t" style="left:235.3px;top:503.40px;line-height:12px;font-size:8.45px;color:#4a4a4a;font-weight:normal;">55570</div>
<div class="t" style="left:270.3px;top:503.40px;line-height:12px;font-size:8.45px;color:#4a4a4a;font-weight:normal;">1000100</div>
<div class="t" style="left:353.3px;top:503.40px;line-height:12px;font-size:8.45px;color:#4a4a4a;font-weight:normal;">Schauf.Gest. Manfred Brett C/O Spedition Kraus</div>
<div class="t" style="left:562.8px;top:503.4px;width:78px;overflow:hidden;line-height:12px;font-size:8.45px;color:#4a4a4a">Bahnhofstraße 16</div>
<div class="t" style="left:646.4px;top:503.40px;line-height:12px;font-size:8.45px;color:#4a4a4a;font-weight:normal;">71364</div>
<div class="t" style="left:729.8px;top:503.40px;line-height:12px;font-size:8.45px;color:#4a4a4a;font-weight:normal;">Winnenden</div>
<div class="t" style="left:813.6px;top:503.40px;line-height:12px;font-size:8.45px;color:#4a4a4a;font-weight:normal;">Kunde</div>
<div class="t" style="left:897px;top:503.40px;line-height:12px;font-size:8.45px;color:#4a4a4a;font-weight:normal;">Brief</div>
<div class="t" style="left:981.3px;top:503.40px;line-height:12px;font-size:8.45px;color:#4a4a4a;font-weight:normal;">1</div>
<div class="t" style="left:1050.7px;top:503.40px;line-height:12px;font-size:8.45px;color:#4a4a4a;font-weight:normal;">Sonstiges (P)</div>
<div class="t" style="left:1120.2px;top:503.40px;line-height:12px;font-size:8.45px;color:#4a4a4a;font-weight:normal;">01-01-2010</div>
<div class="t" style="left:1189.6px;top:503.40px;line-height:12px;font-size:8.45px;color:#4a4a4a;font-weight:normal;">01-01-9000</div>
<div class="r" style="left:229px;top:517px;width:1023.6px;height:1px;background:#dcdde1;"></div>
<div class="t" style="left:235.3px;top:522.30px;line-height:12px;font-size:8.45px;color:#4a4a4a;font-weight:normal;">55571</div>
<div class="t" style="left:270.3px;top:522.30px;line-height:12px;font-size:8.45px;color:#4a4a4a;font-weight:normal;">1000101</div>
<div class="t" style="left:353.3px;top:522.30px;line-height:12px;font-size:8.45px;color:#4a4a4a;font-weight:normal;">Rvg Handelsges. für Reform- und Diätwaren Mbh</div>
<div class="t" style="left:562.8px;top:522.3px;width:78px;overflow:hidden;line-height:12px;font-size:8.45px;color:#4a4a4a">Saarstr. 16 A</div>
<div class="t" style="left:646.4px;top:522.30px;line-height:12px;font-size:8.45px;color:#4a4a4a;font-weight:normal;">08056</div>
<div class="t" style="left:729.8px;top:522.30px;line-height:12px;font-size:8.45px;color:#4a4a4a;font-weight:normal;">Zwickau</div>
<div class="t" style="left:813.6px;top:522.30px;line-height:12px;font-size:8.45px;color:#4a4a4a;font-weight:normal;">Kunde</div>
<div class="t" style="left:897px;top:522.30px;line-height:12px;font-size:8.45px;color:#4a4a4a;font-weight:normal;">Brief</div>
<div class="t" style="left:981.3px;top:522.30px;line-height:12px;font-size:8.45px;color:#4a4a4a;font-weight:normal;">1</div>
<div class="t" style="left:1050.7px;top:522.30px;line-height:12px;font-size:8.45px;color:#4a4a4a;font-weight:normal;">Sonstiges (P)</div>
<div class="t" style="left:1120.2px;top:522.30px;line-height:12px;font-size:8.45px;color:#4a4a4a;font-weight:normal;">17-04-2014</div>
<div class="t" style="left:1189.6px;top:522.30px;line-height:12px;font-size:8.45px;color:#4a4a4a;font-weight:normal;">01-01-9000</div>
<div class="r" style="left:229px;top:536px;width:1023.6px;height:1px;background:#dcdde1;"></div>
<div class="t" style="left:235.3px;top:541.20px;line-height:12px;font-size:8.45px;color:#4a4a4a;font-weight:normal;">55572</div>
<div class="t" style="left:270.3px;top:541.20px;line-height:12px;font-size:8.45px;color:#4a4a4a;font-weight:normal;">1000102</div>
<div class="t" style="left:353.3px;top:541.20px;line-height:12px;font-size:8.45px;color:#4a4a4a;font-weight:normal;">Schaufenstergestaltung Grüger und Martin Gbr</div>
<div class="t" style="left:562.8px;top:541.2px;width:78px;overflow:hidden;line-height:12px;font-size:8.45px;color:#4a4a4a">Bahnhofstr. 10</div>
<div class="t" style="left:646.4px;top:541.20px;line-height:12px;font-size:8.45px;color:#4a4a4a;font-weight:normal;">53340</div>
<div class="t" style="left:729.8px;top:541.20px;line-height:12px;font-size:8.45px;color:#4a4a4a;font-weight:normal;">Meckenheim</div>
<div class="t" style="left:813.6px;top:541.20px;line-height:12px;font-size:8.45px;color:#4a4a4a;font-weight:normal;">Kunde</div>
<div class="t" style="left:897px;top:541.20px;line-height:12px;font-size:8.45px;color:#4a4a4a;font-weight:normal;">Brief</div>
<div class="t" style="left:981.3px;top:541.20px;line-height:12px;font-size:8.45px;color:#4a4a4a;font-weight:normal;">1</div>
<div class="t" style="left:1050.7px;top:541.20px;line-height:12px;font-size:8.45px;color:#4a4a4a;font-weight:normal;">Sonstiges (P)</div>
<div class="t" style="left:1120.2px;top:541.20px;line-height:12px;font-size:8.45px;color:#4a4a4a;font-weight:normal;">01-01-2010</div>
<div class="t" style="left:1189.6px;top:541.20px;line-height:12px;font-size:8.45px;color:#4a4a4a;font-weight:normal;">01-01-9000</div>
<div class="r" style="left:229px;top:555px;width:1023.6px;height:1px;background:#dcdde1;"></div>
<div class="t" style="left:235.3px;top:560.10px;line-height:12px;font-size:8.45px;color:#4a4a4a;font-weight:normal;">55573</div>
<div class="t" style="left:270.3px;top:560.10px;line-height:12px;font-size:8.45px;color:#4a4a4a;font-weight:normal;">1000103</div>
<div class="t" style="left:353.3px;top:560.10px;line-height:12px;font-size:8.45px;color:#4a4a4a;font-weight:normal;">Pharma-Werbung Peter Stadler</div>
<div class="t" style="left:562.8px;top:560.1px;width:78px;overflow:hidden;line-height:12px;font-size:8.45px;color:#4a4a4a">Osterhofener Str. 8</div>
<div class="t" style="left:646.4px;top:560.10px;line-height:12px;font-size:8.45px;color:#4a4a4a;font-weight:normal;">93055</div>
<div class="t" style="left:729.8px;top:560.10px;line-height:12px;font-size:8.45px;color:#4a4a4a;font-weight:normal;">Regensburg</div>
<div class="t" style="left:813.6px;top:560.10px;line-height:12px;font-size:8.45px;color:#4a4a4a;font-weight:normal;">Kunde</div>
<div class="t" style="left:897px;top:560.10px;line-height:12px;font-size:8.45px;color:#4a4a4a;font-weight:normal;">Brief</div>
<div class="t" style="left:981.3px;top:560.10px;line-height:12px;font-size:8.45px;color:#4a4a4a;font-weight:normal;">1</div>
<div class="t" style="left:1050.7px;top:560.10px;line-height:12px;font-size:8.45px;color:#4a4a4a;font-weight:normal;">Sonstiges (P)</div>
<div class="t" style="left:1120.2px;top:560.10px;line-height:12px;font-size:8.45px;color:#4a4a4a;font-weight:normal;">16-11-2015</div>
<div class="t" style="left:1189.6px;top:560.10px;line-height:12px;font-size:8.45px;color:#4a4a4a;font-weight:normal;">01-01-9000</div>
<div class="r" style="left:229px;top:574px;width:1023.6px;height:1px;background:#dcdde1;"></div>
<div class="t" style="left:235.3px;top:579.00px;line-height:12px;font-size:8.45px;color:#4a4a4a;font-weight:normal;">55574</div>
<div class="t" style="left:270.3px;top:579.00px;line-height:12px;font-size:8.45px;color:#4a4a4a;font-weight:normal;">1000104</div>
<div class="t" style="left:353.3px;top:579.00px;line-height:12px;font-size:8.45px;color:#4a4a4a;font-weight:normal;">A-Deko-Dienst Karl-Heinz Nonnenbruch</div>
<div class="t" style="left:562.8px;top:579.0px;width:78px;overflow:hidden;line-height:12px;font-size:8.45px;color:#4a4a4a">Hugo-Junkers-Str. 76</div>
<div class="t" style="left:646.4px;top:579.00px;line-height:12px;font-size:8.45px;color:#4a4a4a;font-weight:normal;">50739</div>
<div class="t" style="left:729.8px;top:579.00px;line-height:12px;font-size:8.45px;color:#4a4a4a;font-weight:normal;">Köln</div>
<div class="t" style="left:813.6px;top:579.00px;line-height:12px;font-size:8.45px;color:#4a4a4a;font-weight:normal;">Kunde</div>
<div class="t" style="left:897px;top:579.00px;line-height:12px;font-size:8.45px;color:#4a4a4a;font-weight:normal;">Brief</div>
<div class="t" style="left:981.3px;top:579.00px;line-height:12px;font-size:8.45px;color:#4a4a4a;font-weight:normal;">1</div>
<div class="t" style="left:1050.7px;top:579.00px;line-height:12px;font-size:8.45px;color:#4a4a4a;font-weight:normal;">Sonstiges (P)</div>
<div class="t" style="left:1120.2px;top:579.00px;line-height:12px;font-size:8.45px;color:#4a4a4a;font-weight:normal;">16-11-2015</div>
<div class="t" style="left:1189.6px;top:579.00px;line-height:12px;font-size:8.45px;color:#4a4a4a;font-weight:normal;">01-01-9000</div>
<div class="r" style="left:229px;top:593px;width:1023.6px;height:1px;background:#dcdde1;"></div>
<div class="t" style="left:235.3px;top:597.90px;line-height:12px;font-size:8.45px;color:#4a4a4a;font-weight:normal;">55575</div>
<div class="t" style="left:270.3px;top:597.90px;line-height:12px;font-size:8.45px;color:#4a4a4a;font-weight:normal;">1000105</div>
<div class="t" style="left:353.3px;top:597.90px;line-height:12px;font-size:8.45px;color:#4a4a4a;font-weight:normal;">Barozzi Werbung Gmbh</div>
<div class="t" style="left:562.8px;top:597.9px;width:78px;overflow:hidden;line-height:12px;font-size:8.45px;color:#4a4a4a">Flinschstr. 51</div>
<div class="t" style="left:646.4px;top:597.90px;line-height:12px;font-size:8.45px;color:#4a4a4a;font-weight:normal;">60388</div>
<div class="t" style="left:729.8px;top:597.90px;line-height:12px;font-size:8.45px;color:#4a4a4a;font-weight:normal;">Frankfurt</div>
<div class="t" style="left:813.6px;top:597.90px;line-height:12px;font-size:8.45px;color:#4a4a4a;font-weight:normal;">Kunde</div>
<div class="t" style="left:897px;top:597.90px;line-height:12px;font-size:8.45px;color:#4a4a4a;font-weight:normal;">Brief</div>
<div class="t" style="left:981.3px;top:597.90px;line-height:12px;font-size:8.45px;color:#4a4a4a;font-weight:normal;">1</div>
<div class="t" style="left:1050.7px;top:597.90px;line-height:12px;font-size:8.45px;color:#4a4a4a;font-weight:normal;">Sonstiges (P)</div>
<div class="t" style="left:1120.2px;top:597.90px;line-height:12px;font-size:8.45px;color:#4a4a4a;font-weight:normal;">01-01-2010</div>
<div class="t" style="left:1189.6px;top:597.90px;line-height:12px;font-size:8.45px;color:#4a4a4a;font-weight:normal;">01-01-9000</div>
<div class="r" style="left:229px;top:612px;width:1023.6px;height:1px;background:#dcdde1;"></div>
<svg style="left:0;top:0" width="1270" height="609"><g stroke="#ffee00" stroke-width="5.5" stroke-linecap="round" stroke-linejoin="round" fill="none"><path d="M1077 251.7 L1139.2 110.5"/><path d="M1117.7 124 L1139.2 110.5 L1143.2 135"/></g></svg>
</div></body></html>
